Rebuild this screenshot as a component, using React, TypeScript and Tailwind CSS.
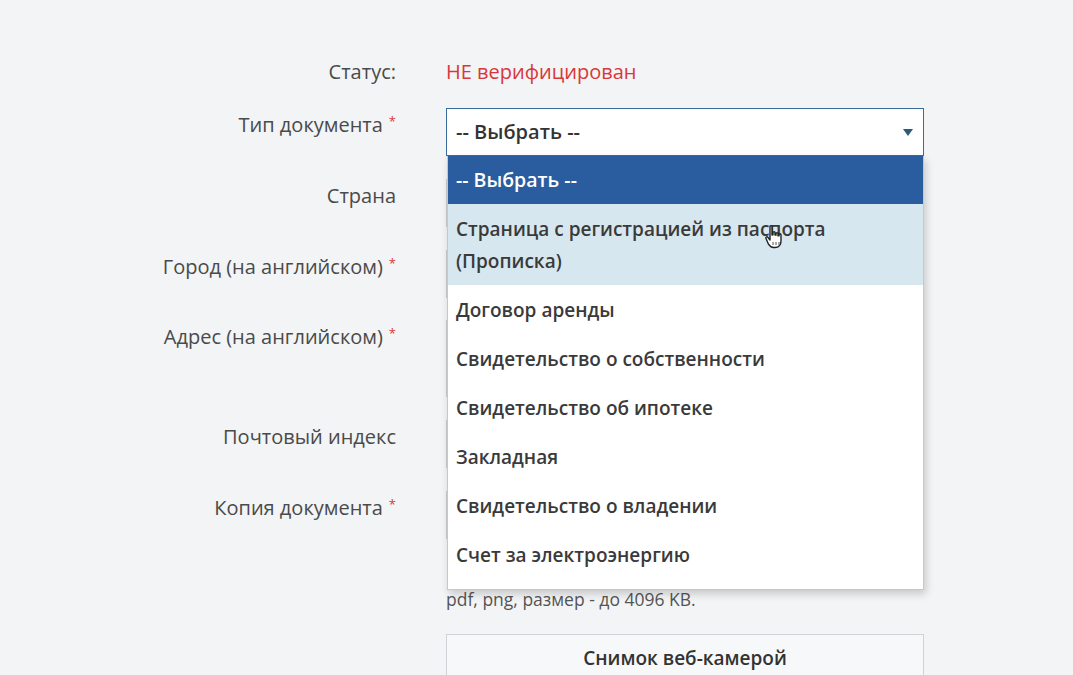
import React from 'react'

const options = [
  'Страница с регистрацией из паспорта (Прописка)',
  'Договор аренды',
  'Свидетельство о собственности',
  'Свидетельство об ипотеке',
  'Закладная',
  'Свидетельство о владении',
  'Счет за электроэнергию',
]

function Label({ text, required }: { text: string; required?: boolean }) {
  return (
    <div className="w-[396px] shrink-0 text-right pt-[5px] leading-6 text-[20px] text-[#4a4a4a]">
      {text}
      {required && <span className="text-[#d9383a] text-[13px] align-top ml-[6px] relative top-[-4px]">*</span>}
    </div>
  )
}

function HandCursor() {
  return (
    <svg className="absolute left-[316px] top-[20px]" width="22" height="26" viewBox="0 0 22 26">
      <path
        d="M6 2.5c0-1.2 2-1.2 2 0V11l1-.2V8.5c0-1.2 2-1.2 2 0V11l1 .1V9.5c0-1.2 2-1.2 2 0v2.2l1 .2v-1.2c0-1.2 2-1.2 2 0V17c0 3.5-2 6.5-6 6.5h-1.5c-2.5 0-3.8-1.3-5-3.3L2 14.5c-.7-1.2.9-2.3 1.8-1.2L6 16V2.5z"
        fill="#fff"
        stroke="#222"
        strokeWidth="1.4"
        strokeLinejoin="round"
      />
      <path d="M9 18v3M12 18v3M15 18v3" stroke="#555" strokeWidth="1" />
    </svg>
  )
}

export default function App() {
  return (
    <div className="h-[675px] overflow-hidden bg-[#f2f4f5] font-['Open_Sans',sans-serif]">
      <div className="pt-[60px] flex flex-col">
        {/* статус */}
        <div className="flex">
          <div className="w-[396px] shrink-0 text-right leading-6 text-[20px] text-[#4a4a4a]">Статус:</div>
          <div className="ml-[50px] leading-6 text-[20px] text-[#d9383a]">НЕ верифицирован</div>
        </div>

        {/* тип документа + открытый список */}
        <div className="flex mt-[24px]">
          <Label text="Тип документа" required />
          <div className="ml-[50px] w-[478px] relative z-10">
            <div className="h-[48px] bg-white border border-[#3b6c9e] flex items-center justify-between pl-[9px] pr-[10px]">
              <span className="text-[20px] font-semibold text-[#333]">-- Выбрать --</span>
              <span className="w-0 h-0 border-l-[5px] border-r-[5px] border-t-[7px] border-l-transparent border-r-transparent border-t-[#2d5a78]" />
            </div>
            <div className="absolute left-[1px] right-0 top-full bg-white border border-[#c6c9cc] border-t-0 shadow-[2px_4px_8px_rgba(0,0,0,0.18)] pb-[10px]">
              <div className="h-[48px] flex items-center px-[8px] bg-[#2a5d9f] text-[19.5px] font-semibold text-white">
                -- Выбрать --
              </div>
              {options.map((o, i) => (
                <div
                  key={o}
                  className={
                    i === 0
                      ? 'relative h-[81px] flex items-center px-[8px] bg-[#d7e7ef] text-[19px] leading-8 font-semibold text-[#3a3a3a]'
                      : 'h-[49px] flex items-center px-[8px] text-[19px] leading-8 font-semibold text-[#3a3a3a]'
                  }
                >
                  <span className={i === 0 ? 'w-[380px]' : ''}>{o}</span>
                  {i === 0 && <HandCursor />}
                </div>
              ))}
            </div>
          </div>
        </div>

        {/* страна */}
        <div className="flex mt-[23px]">
          <Label text="Страна" />
          <div className="ml-[50px] w-[478px] h-[48px] bg-white border border-[#ccc]" />
        </div>

        {/* город */}
        <div className="flex mt-[23px]">
          <Label text="Город (на английском)" required />
          <div className="ml-[50px] w-[478px] h-[48px] bg-white border border-[#ccc]" />
        </div>

        {/* адрес */}
        <div className="flex mt-[22px]">
          <Label text="Адрес (на английском)" required />
          <div className="ml-[50px] w-[478px] h-[77px] bg-white border border-[#ccc]" />
        </div>

        {/* индекс */}
        <div className="flex mt-[23px]">
          <Label text="Почтовый индекс" />
          <div className="ml-[50px] w-[478px] h-[48px] bg-white border border-[#ccc]" />
        </div>

        {/* копия документа */}
        <div className="flex mt-[23px]">
          <Label text="Копия документа" required />
          <div className="ml-[50px] w-[478px] flex flex-col">
            <div className="h-[48px] bg-white border border-[#ccc]" />
            <p className="mt-[48px] text-[17.5px] leading-6 text-[#555]">pdf, png, размер - до 4096 KB.</p>
            <button className="mt-[23px] h-[48px] w-full border border-[#cfd3d6] bg-[#f7f8f9] text-[19px] font-semibold text-[#333]">
              Снимок веб-камерой
            </button>
          </div>
        </div>
      </div>
    </div>
  )
}
